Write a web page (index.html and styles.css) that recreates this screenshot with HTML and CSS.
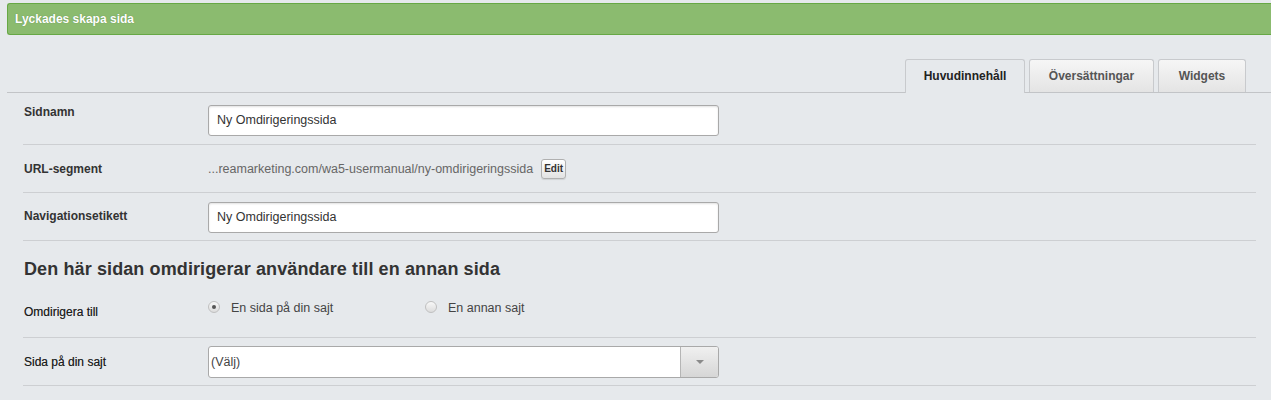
FILE: index.html
```html
<!DOCTYPE html>
<html lang="sv">
<head>
<meta charset="utf-8">
<title>Ny Omdirigeringssida</title>
<link rel="stylesheet" href="styles.css">
</head>
<body>
<div class="page">
  <div class="alert">Lyckades skapa sida</div>
  <div class="tabs">
    <div class="tab tab-main active">Huvudinnehåll</div>
    <div class="tab tab-trans">Översättningar</div>
    <div class="tab tab-widgets">Widgets</div>
  </div>
  <div class="form">
    <div class="row row-name">
      <div class="label">Sidnamn</div>
      <div class="field"><div class="input">Ny Omdirigeringssida</div></div>
    </div>
    <div class="row row-url">
      <div class="label">URL-segment</div>
      <div class="field url"><span class="url-text">...reamarketing.com/wa5-usermanual/ny-omdirigeringssida</span><span class="edit">Edit</span></div>
    </div>
    <div class="row row-nav">
      <div class="label">Navigationsetikett</div>
      <div class="field"><div class="input">Ny Omdirigeringssida</div></div>
    </div>
    <div class="section">
      <h2 class="heading">Den här sidan omdirigerar användare till en annan sida</h2>
      <div class="radio-row">
        <div class="label label-thin">Omdirigera till</div>
        <div class="radios">
          <span class="radio-opt"><span class="radio checked"></span>En sida på din sajt</span>
          <span class="radio-opt"><span class="radio"></span>En annan sajt</span>
        </div>
      </div>
    </div>
    <div class="row row-select">
      <div class="label label-thin">Sida på din sajt</div>
      <div class="field">
        <div class="select"><span class="select-text">(Välj)</span><span class="select-btn"><svg width="8" height="4" viewBox="0 0 8 4"><path d="M0 0h8L4 4z" fill="#8a8a8a"/></svg></span></div>
      </div>
    </div>
  </div>
</div>
</body>
</html>
```
FILE: styles.css
```css
html, body {
  margin: 0;
  padding: 0;
  background: #e6e9ec;
  overflow: hidden;
}
body {
  font-family: "Liberation Sans", Arial, sans-serif;
  font-size: 12px;
  color: #333;
}
.page {
  padding: 3px 0 0 7px;
}
.alert {
  background: #8bbb6f;
  border: 1px solid #67a845;
  border-right: none;
  border-radius: 3px 0 0 3px;
  color: #fff;
  font-weight: bold;
  font-size: 12px;
  height: 30px;
  line-height: 30px;
  padding-left: 7px;
  text-shadow: 0 0 1px rgba(60, 100, 40, 0.6);
}
.tabs {
  display: flex;
  justify-content: flex-end;
  gap: 4px;
  margin-top: 24px;
  padding-right: 25px;
  border-bottom: 1px solid #c2c4c7;
  height: 33px;
}
.tab {
  box-sizing: border-box;
  height: 33px;
  line-height: 32px;
  text-align: center;
  font-weight: bold;
  color: #555;
  border: 1px solid #c8cacd;
  border-bottom: none;
  border-radius: 3px 3px 0 0;
  background: linear-gradient(#f6f6f6, #e4e4e4);
}
.tab-main { width: 120px; }
.tab-trans { width: 125px; }
.tab-widgets { width: 88px; }
.tab.active {
  background: #e6e9ec;
  color: #222;
  height: 34px;
  margin-bottom: -1px;
}
.form {
  padding: 0 15px 0 16px;
}
.row {
  display: flex;
  border-bottom: 1px solid #cdcfd2;
}
.label {
  width: 184px;
  font-weight: bold;
  padding-left: 1px;
  line-height: 14px;
  color: #333;
}
.label-thin {
  font-weight: normal;
  color: #1e1e1e;
  text-shadow: 0 0 0.4px rgba(0, 0, 0, 0.5);
}
.field {
  flex: 0 0 511px;
}
.input {
  box-sizing: border-box;
  height: 31px;
  border: 1px solid #a9a9a9;
  border-radius: 3px;
  background: #fff;
  box-shadow: inset 0 1px 2px rgba(0, 0, 0, 0.12);
  line-height: 29px;
  padding-left: 8px;
  color: #333;
  font-size: 12.5px;
}
.row-name {
  padding: 12px 0 8px;
}
.row-name .label {
  padding-top: 0;
}
.row-url {
  height: 47px;
  align-items: center;
}
.url {
  display: flex;
  align-items: center;
  gap: 8px;
  color: #666;
  font-size: 12.5px;
}
.edit {
  display: inline-block;
  box-sizing: border-box;
  font-size: 10px;
  font-weight: bold;
  color: #333;
  width: 25px;
  text-align: center;
  height: 20px;
  line-height: 18px;
  border: 1px solid #b0b0b0;
  border-radius: 3px;
  background: linear-gradient(#fff, #e2e2e2);
  box-shadow: 0 1px 1px rgba(0, 0, 0, 0.1);
}
.row-nav {
  padding: 9px 0 7px;
}
.row-nav .label {
  padding-top: 7px;
}
.section {
  border-bottom: 1px solid #cdcfd2;
}
.heading {
  margin: 0;
  padding: 17px 0 0 1px;
  font-size: 18px;
  letter-spacing: 0.11px;
  line-height: 22px;
  font-weight: bold;
  color: #333;
}
.radio-row {
  display: flex;
  height: 57px;
}
.radio-row .label {
  padding-top: 25px;
}
.radios {
  display: flex;
  padding-top: 21px;
  color: #444;
  font-size: 12.5px;
}
.radio-opt {
  display: flex;
  align-items: flex-start;
  gap: 11px;
  width: 217px;
  line-height: 14px;
}
.radio {
  width: 12px;
  height: 12px;
  box-sizing: border-box;
  border: 1px solid #c0c0c0;
  border-radius: 50%;
  background: linear-gradient(#f8f8f8, #dcdcdc);
  position: relative;
  margin-top: 0;
}
.radio.checked::after {
  content: "";
  position: absolute;
  left: 3px;
  top: 3px;
  width: 4px;
  height: 4px;
  border-radius: 50%;
  background: #555;
}
.row-select {
  padding: 8px 0 7px;
}
.row-select .label {
  padding-top: 9px;
}
.select {
  display: flex;
  height: 32px;
  box-sizing: border-box;
  border: 1px solid #a9a9a9;
  border-radius: 3px;
  background: #fff;
}
.select-text {
  flex: 1;
  line-height: 30px;
  padding-left: 2px;
  color: #444;
  font-size: 12.5px;
}
.select-btn {
  width: 37px;
  border-left: 1px solid #b5b5b5;
  background: linear-gradient(#f0f0f0, #d6d6d6);
  border-radius: 0 2px 2px 0;
  display: flex;
  align-items: center;
  justify-content: center;
}
```
